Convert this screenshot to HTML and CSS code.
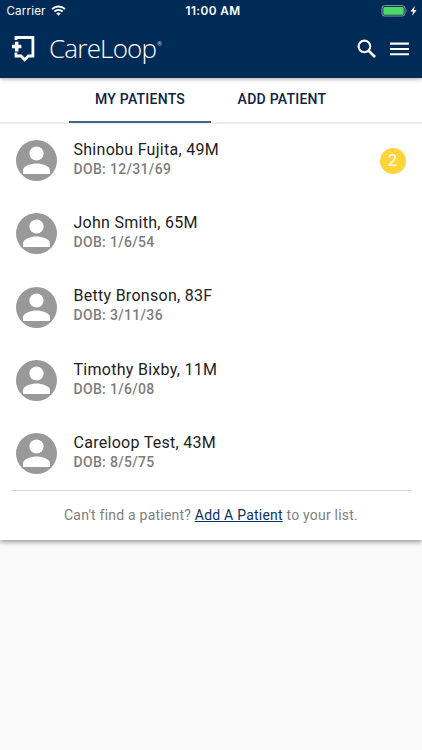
FILE: index.html
```
<!DOCTYPE html>
<html lang="en">
<head>
<meta charset="utf-8">
<title>CareLoop</title>
<link rel="stylesheet" href="styles.css">
</head>
<body>
<svg width="0" height="0" class="defs">
  <symbol id="person" viewBox="0 0 41 41">
    <circle cx="20.5" cy="20.5" r="20.5" fill="#999"/>
    <circle cx="20.5" cy="13.5" r="7.1" fill="#fff"/>
    <path d="M7 34V30.5C7 25.8 15.5 23.6 20.5 23.6S34 25.8 34 30.5V34Z" fill="#fff"/>
  </symbol>
</svg>
<header class="header">
  <div class="status">
    <div class="status-left"><span class="carrier">Carrier</span>
      <svg class="wifi" width="15" height="11" viewBox="0 0 15 11" fill="none" stroke="#fff" stroke-width="2"><path d="M1 4.1C4.7.5 10.3.5 14 4.1M3.4 6.6C5.8 4.5 9.2 4.5 11.6 6.6"/><path d="M5.2 8.3Q7.5 6.6 9.8 8.3L7.5 10.8Z" fill="#fff" stroke="none"/></svg>
    </div>
    <span class="time">11:00 AM</span>
    <div class="status-right">
      <svg width="38" height="13" viewBox="0 0 38 13"><rect x="1" y=".6" width="23" height="10.4" rx="2.6" fill="none" stroke="#8799ad"/><rect x="2.3" y="1.9" width="20.4" height="7.8" rx="1" fill="#4cd964"/><path d="M25.5 4Q27 5.8 25.5 7.6Z" fill="#8799ad"/><path d="M34 .7L29.4 6.5H32.2L31 11L35.6 5.1H32.8Z" fill="#fff"/></svg>
    </div>
  </div>
  <div class="appbar">
    <svg class="mark" width="24" height="28" viewBox="0 0 24 28" fill="none" stroke="#fff"><path d="M4 5.1V2.5H20.9V21H16.5L12.7 24.8L9 21H4V17.5" stroke-width="2.8"/><path d="M4.7 6.8V16.4M0 11.6H9.4" stroke-width="3.5"/></svg>
    <div class="brand"><span class="word">CareLoop</span><span class="reg">®</span></div>
    <svg class="search" width="20" height="20" viewBox="0 0 20 20" fill="none" stroke="#fff"><circle cx="7.4" cy="7.4" r="5.8" stroke-width="2.1"/><path d="M11.6 11.6L18 18" stroke-width="2.7"/></svg>
    <svg class="menu" width="20" height="14" viewBox="0 0 20 14" fill="#fff"><path d="M0 .6H19V2.7H0ZM0 5.9H19V8H0ZM0 11.2H19V13.3H0Z"/></svg>
  </div>
</header>
<main class="card">
  <nav class="tabs"><a class="tab active"><span>MY PATIENTS</span></a><a class="tab"><span>ADD PATIENT</span></a></nav>
  <ul class="list">
    <li class="row"><svg class="avatar"><use href="#person"/></svg><div class="info"><div class="name">Shinobu Fujita, 49M</div><div class="dob">DOB: 12/31/69</div></div><span class="badge">2</span></li>
    <li class="row"><svg class="avatar"><use href="#person"/></svg><div class="info"><div class="name">John Smith, 65M</div><div class="dob">DOB: 1/6/54</div></div></li>
    <li class="row"><svg class="avatar"><use href="#person"/></svg><div class="info"><div class="name">Betty Bronson, 83F</div><div class="dob">DOB: 3/11/36</div></div></li>
    <li class="row"><svg class="avatar"><use href="#person"/></svg><div class="info"><div class="name">Timothy Bixby, 11M</div><div class="dob">DOB: 1/6/08</div></div></li>
    <li class="row"><svg class="avatar"><use href="#person"/></svg><div class="info"><div class="name">Careloop Test, 43M</div><div class="dob">DOB: 8/5/75</div></div></li>
  </ul>
  <p class="foot">Can't find a patient? <a class="link">Add A Patient</a> to your list.</p>
</main>
</body>
</html>
```
FILE: styles.css
```
* { box-sizing: border-box; }
body { margin: 0; background: #fafafa; font-family: Roboto, sans-serif; min-height: 750px; }
.defs { display: block; height: 0; }
.header { position: relative; z-index: 1; height: 78px; background: #002b57; color: #fff; box-shadow: 0 1px 4px rgba(0,0,0,.35); }
.status { height: 22px; display: grid; grid-template-columns: 1fr auto 1fr; align-items: center; font-family: Inter, sans-serif; font-size: 12px; line-height: 22px; }
.status-left { display: flex; align-items: center; gap: 5.5px; padding-left: 6.5px; }
.wifi { margin-bottom: 1px; }
.carrier { font-size: 11.6px; letter-spacing: .15px; }
.time { font-weight: 600; font-size: 11.8px; letter-spacing: .4px; padding-left: 4px; }
.status-right { display: flex; justify-content: flex-end; padding-right: 3.5px; }
.appbar { height: 56px; display: flex; align-items: center; padding: 0 12.5px 2px 12px; }
.brand { display: flex; margin-left: 13px; flex: 1; line-height: 30px; padding-bottom: 3px; }
.word { font-family: "Open Sans", sans-serif; font-weight: 300; font-size: 26px; letter-spacing: -.8px; }
.reg { font-size: 6px; line-height: 22px; margin-left: 1px; opacity: .8; }
.search { margin-right: 13px; }
.card { height: 462px; background: #fff; box-shadow: 0 2px 5px rgba(0,0,0,.4); }
.tabs { height: 46px; display: flex; justify-content: center; border-bottom: 2px solid #ececec; }
.tab { width: 142px; height: 45px; display: flex; justify-content: center; font-size: 14px; font-weight: 500; line-height: 43px; letter-spacing: .25px; color: #0b2347; border-bottom: 2px solid transparent; }
.active { border-color: #47658b; }
.list { list-style: none; margin: 0; padding: 0; }
.row { height: 73.3px; display: flex; align-items: center; padding: 0 16.5px 0 16.3px; }
.avatar { width: 41px; height: 41px; flex: none; }
.info { flex: 1; margin-left: 16.2px; padding-bottom: 4px; }
.name { font-size: 16px; line-height: 21px; letter-spacing: .28px; color: #222; }
.dob { font-size: 14px; line-height: 19px; font-weight: 500; letter-spacing: .33px; color: #7d7d7d; }
.badge { width: 26px; height: 26px; border-radius: 50%; background: #ffd43b; color: #fff; font-size: 16px; line-height: 25px; text-align: center; }
.foot { margin: 0 10.5px; border-top: 1px solid #d8d8d8; text-align: center; font-size: 14px; line-height: 49px; letter-spacing: .22px; color: #808080; }
.link { color: #0b2f60; text-decoration: underline; }
```
